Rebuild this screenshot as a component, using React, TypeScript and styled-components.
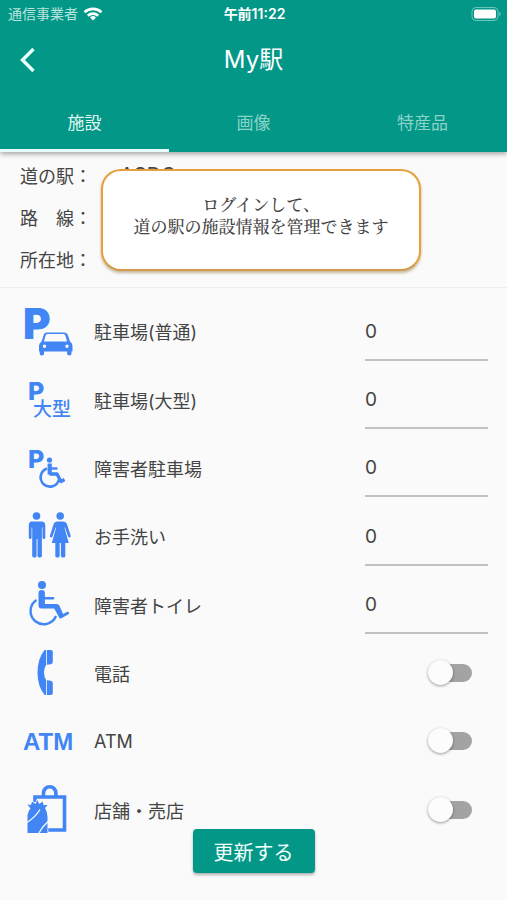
import React, { useState } from "react";
import styled, { createGlobalStyle } from "styled-components";

const teal = "#039788";
const blue = "#4285f4";

const GlobalStyle = createGlobalStyle`
  *, *::before, *::after { box-sizing: border-box; }
  body {
    margin: 0;
    background: #fafafa;
    color: #444;
    font-family: Inter, "Noto Sans CJK JP", sans-serif;
    font-size: 18px;
  }
  button, input { font: inherit; color: inherit; }
`;

const Page = styled.div`
  position: relative;
  display: flex;
  flex-direction: column;
  min-height: 100vh;
  padding-bottom: 56px;
`;

const Header = styled.header`
  background: ${teal};
  color: #fff;
  box-shadow: 0 2px 5px rgba(0, 0, 0, 0.35);
  position: relative;
`;

const StatusBar = styled.div`
  display: grid;
  grid-template-columns: 1fr auto 1fr;
  align-items: center;
  height: 27px;
  padding: 0 6px 0 8px;
  font-size: 14px;
  line-height: 20px;
`;

const Carrier = styled.span`
  display: flex;
  align-items: center;
  gap: 5px;
  color: #b9e4dd;
`;

const Clock = styled.time`
  font-weight: 600;
`;

const BatterySlot = styled.span`
  display: flex;
  justify-content: flex-end;
`;

const AppBar = styled.div`
  display: grid;
  grid-template-columns: 56px 1fr 56px;
  align-items: center;
  height: 65px;
`;

const BackButton = styled.button`
  display: flex;
  justify-content: center;
  align-items: center;
  height: 48px;
  padding: 0;
  border: 0;
  background: none;
  cursor: pointer;
`;

const Title = styled.h1`
  margin: 0;
  text-align: center;
  font-size: 24px;
  font-weight: 400;
  line-height: 32px;
`;

const Tabs = styled.div`
  display: grid;
  grid-template-columns: repeat(3, 1fr);
  height: 60px;
`;

const Tab = styled.button<{ $active: boolean }>`
  padding: 1px 0 0;
  border: 0;
  border-bottom: 3px solid ${(p) => (p.$active ? "#e6fffd" : "transparent")};
  background: none;
  color: ${(p) => (p.$active ? "#e2f8f3" : "#8ad3c7")};
  font-size: 17px;
  cursor: pointer;
`;

const Info = styled.section`
  position: relative;
  padding: 2px 20px 7px;
  border-bottom: 1px solid #eeeeee;
`;

const Facts = styled.dl`
  display: grid;
  grid-template-columns: 100px 1fr;
  grid-auto-rows: 42px;
  align-items: center;
  margin: 0;
  dd {
    margin: 0;
    font-size: 20px;
    line-height: 24px;
  }
`;

const Notice = styled.p`
  position: absolute;
  top: 17px;
  left: 20%;
  right: 17%;
  display: flex;
  flex-direction: column;
  justify-content: center;
  height: 102px;
  margin: 0;
  padding-bottom: 10px;
  border: 2px solid #e5a03c;
  border-bottom-color: #d29a48;
  border-radius: 20px;
  background: #fff;
  box-shadow: 0 2px 3px rgba(120, 80, 20, 0.4);
  text-align: center;
  white-space: nowrap;
  font-family: "Noto Serif CJK JP", "Noto Sans CJK JP", serif;
  font-size: 17px;
  font-weight: 500;
  line-height: 22px;
`;

const List = styled.ul`
  flex: 1;
  display: grid;
  grid-auto-rows: minmax(64px, 1fr);
  margin: 0;
  padding: 9px 19px 0 22px;
  list-style: none;
`;

const Row = styled.li`
  display: grid;
  grid-template-columns: 52px 1fr auto;
  align-items: center;
  column-gap: 20px;
`;

const RowIcon = styled.svg`
  width: 52px;
  height: 52px;
  fill: ${blue};
  overflow: visible;
`;

const NumberField = styled.input`
  width: 123px;
  height: 59px;
  padding: 2px 0 0;
  border: 0;
  border-bottom: 2px solid #c2c2c2;
  border-radius: 0;
  background: none;
  font-size: 19px;
  outline: none;
`;

const Switch = styled.input`
  appearance: none;
  position: relative;
  width: 34px;
  height: 18px;
  margin: 0 16px 0 0;
  border-radius: 9px;
  background: #a3a3a3;
  cursor: pointer;

  &::before {
    content: "";
    position: absolute;
    top: -4px;
    left: -10px;
    width: 25px;
    height: 25px;
    border-radius: 50%;
    background: #fcfcfc;
    box-shadow: 0 1px 3px rgba(0, 0, 0, 0.4);
  }
  &:checked { background: #8bcfc6; }
  &:checked::before { left: 19px; background: ${teal}; }
`;

const UpdateButton = styled.button`
  position: absolute;
  bottom: 27px;
  left: 50%;
  transform: translateX(-50%);
  width: 122px;
  height: 44px;
  padding: 0;
  border: 0;
  border-radius: 4px;
  background: ${teal};
  color: #f2fffc;
  box-shadow: 0 2px 3px rgba(0, 0, 0, 0.3);
  font-size: 20px;
  white-space: nowrap;
  cursor: pointer;
`;

const IconText = styled.text<{ $size: number; $weight: number }>`
  font-family: Inter, "Noto Sans CJK JP", sans-serif;
  font-size: ${(p) => p.$size}px;
  font-weight: ${(p) => p.$weight};
`;

const AtmText = styled.text`
  font-family: "Liberation Sans", sans-serif;
  font-size: 24px;
  font-weight: 700;
`;

const icons: Record<string, React.ReactNode> = {
  car: (
    <>
      <IconText x="1" y="34" $size={42} $weight={900}>P</IconText>
      <path
        fillRule="evenodd"
        stroke="#fafafa"
        strokeWidth="1"
        paintOrder="stroke"
        d="M25 27.500h17q3 0 4 3l2 6q2.500 1.500 2.500 4.500v5.500h-1v2q0 2-2.200 2t-2.200-2v-2h-23v2q0 2-2.200 2t-2.200-2v-2h-.7v-5.500q0-3 2.500-4.500l2-6q.8-3 3.500-3zM25.500 29q-1.400 0-1.900 1.500l-1.700 6h23.200l-1.700-6q-.5-1.500-1.900-1.500zM22.500 39.500a1.700 1.700 0 1 0 0 3.400 1.700 1.700 0 0 0 0-3.400zM45 39.500a1.700 1.700 0 1 0 0 3.400 1.700 1.700 0 0 0 0-3.400z"
      />
    </>
  ),
  large: (
    <>
      <IconText x="6" y="26" $size={25} $weight={800}>P</IconText>
      <IconText x="11" y="42" $size={19} $weight={500}>大型</IconText>
    </>
  ),
  accessibleParking: (
    <>
      <IconText x="6" y="26" $size={25} $weight={800}>P</IconText>
      <circle cx="27.500" cy="18" r="2.600" />
      <g fill="none" stroke={blue} strokeLinejoin="round">
        <path strokeWidth="4.200" d="M27.700 21.500v11" />
        <path strokeWidth="2.400" d="M28 26.500h7.500" />
        <path strokeWidth="3.400" d="M27.500 32h7.500l4 7.500 3.500-2" />
        <path strokeWidth="2.600" d="M25 26.500a9.300 9.300 0 1 0 12 11" />
      </g>
    </>
  ),
  restroom: (
    <>
      <circle cx="14.500" cy="6" r="3.800" />
      <path d="M9.500 11.500h10q3.800 0 3.800 4v12q0 1.500-1.400 1.500t-1.400-1.500v-10h-.6v28.500q0 1.500-2.200 1.500t-2.200-1.500v-17h-.9v17q0 1.500-2.200 1.500t-2.200-1.500v-28.500h-.6v10q0 1.500-1.400 1.500t-1.400-1.500v-12q0-4 2.700-4z" />
      <circle cx="38.200" cy="6" r="3.800" />
      <path d="M35.500 11.500h5.400q3.300 0 4.200 3l3.500 11q.4 1.500-.8 1.900t-1.700-1l-3.200-9h-.5l4.400 15.600h-3.500v13q0 1.500-2.200 1.500t-2.200-1.500v-13h-1.200v13q0 1.500-2.200 1.500t-2.200-1.500v-13h-3.500l4.400-15.600h-.5l-3.200 9q-.5 1.400-1.700 1t-.8-1.900l3.500-11q.9-3 4.100-3z" />
    </>
  ),
  wheelchair: (
    <>
      <circle cx="20" cy="6" r="4" />
      <path d="M16.500 14q0-3 3.200-3t3.200 3v4h8q1.500 0 1.500 1.200t-1.500 1.200h-8v4.600h11.600q2 0 2.800 1.500l3.800 8.500 4.300-2.200q1.200-.4 1.600.8t-.6 1.700l-7 4q-1.500.6-2.200-.8l-5-9h-12.700q-3 0-3-3z" />
      <path fill="none" stroke={blue} strokeWidth="2.400" d="M14.500 21a13.200 13.200 0 1 0 19.500 16" />
    </>
  ),
  phone: (
    <>
      <path d="M22.500 3h1.700v14.800q-2.200 3-2.200 7.700t2.200 7.700v14.800h-1.700q-7-9-7-22.500t7-22.500z" />
      <path d="M25 3h4q1.800 0 1.800 2v10q0 2-2 2.200l-3.800.5zM25 33.300l3.800.5q2 .2 2 2.200v10q0 2-1.800 2h-4z" />
    </>
  ),
  atm: <AtmText x="1" y="35">ATM</AtmText>,
  shop: (
    <>
      <g fill="none" stroke={blue} strokeWidth="3.600">
        <path d="M13 18v-5h29.500v33h-17" />
        <path d="M21.500 13v-4a6.200 6.200 0 0 1 12.400 0v4" />
      </g>
      <path
        stroke="#fafafa"
        strokeWidth="1.500"
        paintOrder="stroke"
        d="M5.500 20.500l3.500.5 1-3.500 3.500 2.500 1.800-4 1.900 4 3.500-2.500.8 3.500 4 0-2.500 3q2.500 4 2.500 9v16h-20v-16q0-5 3-8.500z"
      />
      <path fill="none" stroke="#fafafa" strokeWidth="1.300" d="M5 38.500q8-5 13-13M17 49q3-6 9-11.500" />
    </>
  ),
};

type Facility = { id: string; label: string; kind: "number" | "switch" };

const facilities: Facility[] = [
  { id: "car", label: "駐車場(普通)", kind: "number" },
  { id: "large", label: "駐車場(大型)", kind: "number" },
  { id: "accessibleParking", label: "障害者駐車場", kind: "number" },
  { id: "restroom", label: "お手洗い", kind: "number" },
  { id: "wheelchair", label: "障害者トイレ", kind: "number" },
  { id: "phone", label: "電話", kind: "switch" },
  { id: "atm", label: "ATM", kind: "switch" },
  { id: "shop", label: "店舗・売店", kind: "switch" },
];

const tabs = ["施設", "画像", "特産品"];

export default function App() {
  const [active, setActive] = useState(0);

  return (
    <Page>
      <GlobalStyle />
      <Header>
        <StatusBar>
          <Carrier>
            通信事業者
            <svg width="20" height="14" viewBox="0 0 20 14" fill="none" stroke="#fff" strokeWidth="2.600">
              <path d="M1.500 5.200a12.500 12.500 0 0 1 17 0M4.800 8.700a7.600 7.600 0 0 1 10.400 0" />
              <path fill="#fff" stroke="none" d="M10 13.500l-3-3a4.300 4.300 0 0 1 6 0z" />
            </svg>
          </Carrier>
          <Clock>午前11:22</Clock>
          <BatterySlot>
            <svg width="30" height="14" viewBox="0 0 30 14">
              <rect x="1" y="0.500" width="26" height="13" rx="4" fill="none" stroke="#6fc5ba" />
              <rect x="3" y="2.500" width="22" height="9" rx="2" fill="#fff" />
              <path d="M28.200 4.800q1.500.6 1.500 2.200t-1.500 2.200z" fill="#6fc5ba" />
            </svg>
          </BatterySlot>
        </StatusBar>
        <AppBar>
          <BackButton aria-label="戻る">
            <svg width="16" height="26" viewBox="0 0 16 26" fill="none" stroke="#e9fffb" strokeWidth="3.400">
              <path d="M13.500 2l-11 11 11 11" />
            </svg>
          </BackButton>
          <Title>My駅</Title>
        </AppBar>
        <Tabs role="tablist">
          {tabs.map((name, i) => (
            <Tab key={name} role="tab" aria-selected={i === active} $active={i === active} onClick={() => setActive(i)}>
              {name}
            </Tab>
          ))}
        </Tabs>
      </Header>

      <Info>
        <Facts>
          <dt>道の駅：</dt>
          <dd>ASDC</dd>
          <dt>路　線：</dt>
          <dd />
          <dt>所在地：</dt>
          <dd />
        </Facts>
        <Notice>
          <span>ログインして、</span>
          <span>道の駅の施設情報を管理できます</span>
        </Notice>
      </Info>

      <List>
        {facilities.map(({ id, label, kind }) => (
          <Row key={id}>
            <RowIcon viewBox="0 0 52 52" aria-hidden="true">
              {icons[id]}
            </RowIcon>
            <label htmlFor={id}>{label}</label>
            {kind === "number" ? (
              <NumberField id={id} inputMode="numeric" defaultValue="0" />
            ) : (
              <Switch id={id} type="checkbox" role="switch" />
            )}
          </Row>
        ))}
      </List>

      <UpdateButton type="button">更新する</UpdateButton>
    </Page>
  );
}
